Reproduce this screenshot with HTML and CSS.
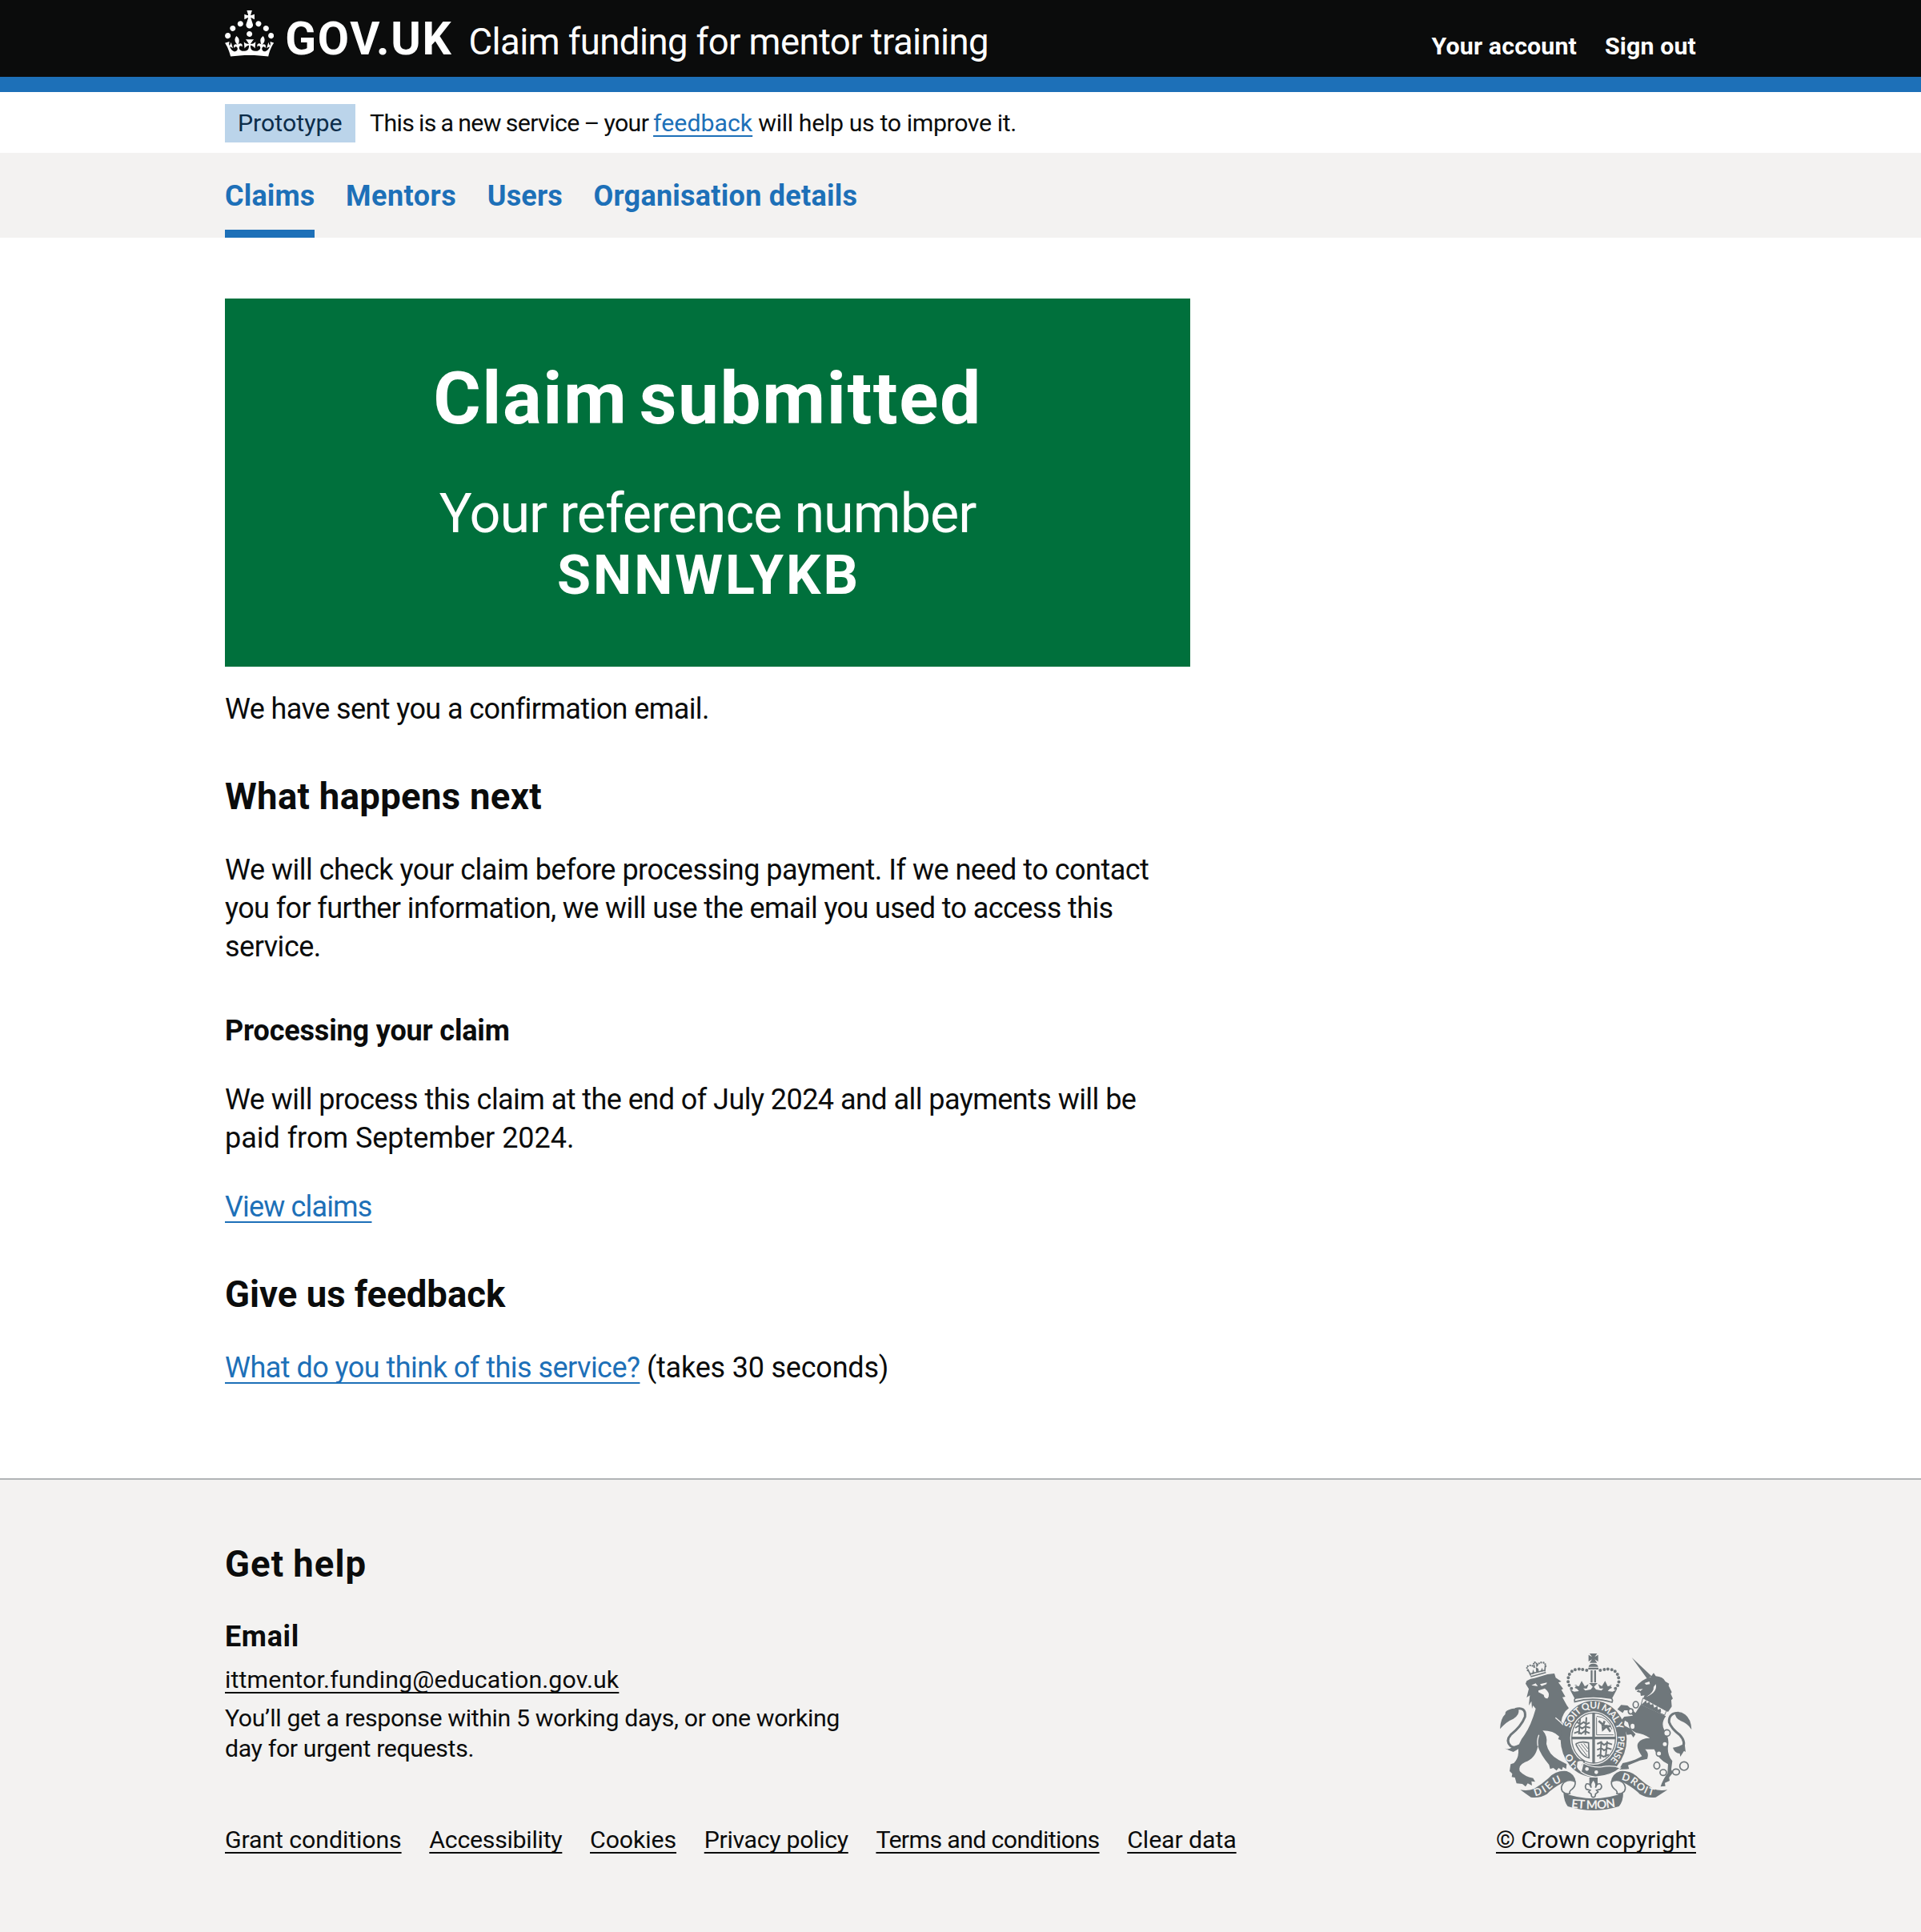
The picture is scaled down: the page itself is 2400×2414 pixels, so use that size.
FILE: index.html
```
<!DOCTYPE html>
<html lang="en">
<head>
<meta charset="utf-8">
<title>Claim submitted - Claim funding for mentor training</title>
<link rel="stylesheet" href="styles.css">
</head>
<body>
<header class="header">
  <div class="container header-row">
    <svg class="crown" viewBox="0 0 32 30" fill="currentColor" aria-hidden="true"><path d="M22.6 10.4c-1 .4-2-.1-2.4-1-.4-.9.1-2 1-2.4.9-.4 2 .1 2.4 1s-.1 2-1 2.4m-5.9 6.7c-.9.4-2-.1-2.4-1-.4-.9.1-2 1-2.4.9-.4 2 .1 2.4 1s-.1 2-1 2.4m10.8-3.7c-1 .4-2-.1-2.4-1-.4-.9.1-2 1-2.4.9-.4 2 .1 2.4 1s0 2-1 2.4m3.3 4.8c-1 .4-2-.1-2.4-1-.4-.9.1-2 1-2.4.9-.4 2 .1 2.4 1s-.1 2-1 2.4M17 4.7l2.3 1.2V2.5l-2.3.7-.2-.2.9-3h-3.4l.9 3-.2.2c-.1.1-2.3-.7-2.3-.7v3.4L15 4.7c.1.1.1.2.2.2l-1.3 4c-.1.2-.1.4-.1.6 0 1.1.8 2 1.9 2.2h.7c1-.2 1.9-1.1 1.9-2.1 0-.2 0-.4-.1-.6l-1.3-4c-.1-.2 0-.2.1-.3m-7.6 5.7c.9.4 2-.1 2.4-1 .4-.9-.1-2-1-2.4-.9-.4-2 .1-2.4 1s0 2 1 2.4m-5 3c.9.4 2-.1 2.4-1 .4-.9-.1-2-1-2.4-.9-.4-2 .1-2.4 1s.1 2 1 2.4m-3.2 4.8c.9.4 2-.1 2.4-1 .4-.9-.1-2-1-2.4-.9-.4-2 .1-2.4 1s0 2 1 2.4m14.8 11c4.4 0 8.6.3 12.3.8 1.1-4.5 2.4-7 3.7-8.8l-2.5-.9c.2 1.3.3 1.9 0 2.7-.4-.4-.8-1.1-1.1-2.3l-1.2 4c.7-.5 1.3-.8 2-.9-1.1 2.5-2.6 3.1-3.5 3-1.1-.2-1.7-1.2-1.5-2.1.3-1.2 1.5-1.5 2.1-.1 1.1-2.3-.8-3-2-2.3 1.9-1.9 2.1-3.5.6-5.6-2.1 1.6-2.1 3.2-1.2 5.5-1.2-1.4-3.2-.6-2.5 1.6.9-1.4 2.1-.5 1.9.8-.2 1.1-1.7 2.1-3.5 1.9-2.7-.2-2.9-2.1-2.9-3.6.7-.1 1.9.5 2.9 1.9l.4-4.3c-1.1 1.1-2.1 1.4-3.2 1.4.4-1.2 2.1-3 2.1-3h-5.4s1.7 1.9 2.1 3c-1.1 0-2.1-.2-3.2-1.4l.4 4.3c1-1.4 2.2-2 2.9-1.9-.1 1.5-.2 3.4-2.9 3.6-1.9.2-3.4-.8-3.5-1.9-.2-1.3 1-2.2 1.9-.8.7-2.3-1.2-3-2.5-1.6.9-2.2.9-3.9-1.2-5.5-1.5 2-1.3 3.7.6 5.6-1.2-.7-3.1 0-2 2.3.6-1.4 1.8-1.1 2.1.1.2.9-.3 1.9-1.5 2.1-.9.2-2.4-.5-3.5-3 .6 0 1.2.3 2 .9l-1.2-4c-.3 1.1-.7 1.9-1.1 2.3-.3-.8-.2-1.4 0-2.7l-2.9.9C1.3 23 2.6 25.5 3.7 30c3.7-.5 7.9-.8 12.3-.8"/></svg>
    <span class="logotype">GOV.UK</span>
    <span class="service-name">Claim funding for mentor training</span>
    <nav class="account"><a>Your account</a><a>Sign out</a></nav>
  </div>
</header>
<div class="container phase">
  <strong class="tag">Prototype</strong>
  <span class="phase-text"><span class="phase-lead">This is a new service – your </span><a class="link phase-link">feedback</a> will help us to improve it.</span>
</div>
<nav class="nav">
  <div class="container nav-row">
    <a class="nav-item active">Claims</a>
    <a class="nav-item mentors">Mentors</a>
    <a class="nav-item">Users</a>
    <a class="nav-item organisation">Organisation details</a>
  </div>
</nav>
<main class="container main">
  <div class="column">
    <section class="panel">
      <h1 class="panel-title">Claim submitted</h1>
      <div class="panel-body"><span>Your reference number</span><strong class="reference">SNNWLYKB</strong></div>
    </section>
    <p class="sent">We have sent you a confirmation email.</p>
    <h2 class="heading next">What happens next</h2>
    <p>We will check your claim before processing payment. If we need to contact<br><span class="tight">you for further information, we will use the email you used to access this</span><br>service.</p>
    <h3 class="subheading">Processing your claim</h3>
    <p class="process">We will process this claim at the end of July 2024 and all payments will be<br><span class="loose">paid from September 2024.</span></p>
    <p><a class="link view">View claims</a></p>
    <h2 class="heading">Give us feedback</h2>
    <p class="last"><a class="link">What do you think of this service?</a> <span class="takes">(takes 30 seconds)</span></p>
  </div>
</main>
<footer class="footer">
  <div class="container footer-row">
    <div class="footer-main">
      <h2 class="footer-title">Get help</h2>
      <h3 class="footer-sub">Email</h3>
      <p class="small"><a class="foot-link mail">ittmentor.funding@education.gov.uk</a></p>
      <p class="small">You’ll get a response within 5 working days, or one working<br>day for urgent requests.</p>
      <div class="foot-links">
        <a class="foot-link">Grant conditions</a>
        <a class="foot-link access">Accessibility</a>
        <a class="foot-link">Cookies</a>
        <a class="foot-link privacy">Privacy policy</a>
        <a class="foot-link terms">Terms and conditions</a>
        <a class="foot-link">Clear data</a>
      </div>
    </div>
    <div class="copyright">
      <svg class="arms" viewBox="72 45 718 590" aria-hidden="true">
        <defs>
          <path id="garter-top" d="M336 325A91 106 0 0 1 513 345"/>
          <path id="garter-right" d="M514 354A92 108 0 0 1 480 450"/>
          <path id="garter-left" d="M372 462A92 106 0 0 1 328 384"/>
          <path id="scroll-left" d="M204 580Q240 572 264 549Q280 534 306 525"/>
          <path id="scroll-mid" d="M338 622Q422 634 508 620"/>
          <path id="scroll-right" d="M526 518Q562 526 580 546Q606 570 648 579"/>
        </defs>
        <!-- lion's tail -->
        <path class="line" stroke-width="9" d="M128 254Q170 242 166 282Q152 318 112 350Q92 372 112 392Q128 404 152 388"/>
        <path d="M72 328Q74 288 92 272Q90 262 106 256Q122 246 142 256Q146 276 122 290Q96 300 72 328ZM88 400Q104 408 118 396L156 380Q154 398 122 414Q108 410 88 400Z"/>
        <!-- lion -->
        <path d="M168 158L172 148Q186 138 202 137L250 123L276 120L281 136L302 150L291 154L309 178L302 181L317 207L306 209L323 240L330 250Q306 268 302 300L318 322L334 350L338 380L330 390L326 378L318 388L312 376L302 384L300 370L290 366L294 356Q272 334 232 334Q252 356 246 384Q254 424 292 444L322 460L320 478L308 470L304 482L292 474L284 484L272 474L260 478L256 462Q224 424 214 392Q206 438 166 452Q140 464 146 486Q164 506 196 512L204 526L190 524L192 540L176 532L168 544L156 534L134 532L128 510L116 508L118 496L108 486L112 460L124 456Q140 440 141 416Q136 384 164 350Q188 316 206 252L196 240L192 252L190 224L180 240L184 202L172 210L180 178Z"/>
        <path class="paper" d="M190 164L206 157L214 168ZM222 160L248 154L246 160L228 167ZM216 184L240 176L248 184Q262 200 250 214Q238 214 236 200L216 190Z"/>
        <path class="bgline" stroke-width="4" d="M280 286Q318 316 334 350M214 392Q210 370 218 350"/>
        <path class="line" stroke-width="5" d="M187 132L244 116M182 122L240 108M188 128L176 104M240 112L242 88"/>
        <path class="dots" stroke-width="7" stroke-dasharray="0 8.5" d="M176 108Q168 94 182 90Q194 88 202 98Q196 82 200 78Q212 78 210 94Q214 80 230 78Q246 80 243 100"/>
        <path d="M192 124L196 104L202 120ZM208 118L206 96L216 102L218 114ZM224 112L230 98L234 112Z"/>
        <!-- unicorn's tail -->
        <path class="line" stroke-width="9" d="M742 268Q704 268 706 302Q714 326 746 350Q772 378 754 404"/>
        <path d="M790 330Q788 290 766 274Q748 260 728 266Q728 288 750 298Q774 306 790 330ZM720 398Q742 396 764 382L768 414L762 410L748 432L746 420Q728 420 720 398Z"/>
        <!-- unicorn -->
        <path d="M566 60L640 130L624 140ZM578 174Q600 142 636 134L648 118L656 130Q684 132 692 150L706 158L704 166L716 190L712 196L720 214L714 220L716 244L702 264L608 216L614 202L600 204L598 192L584 188L592 180L580 182Z"/>
        <path class="paper" d="M614 156L632 150L634 160L620 162ZM656 160Q664 190 620 208Q650 190 648 170ZM590 180L608 178L598 186Z"/>
        <path d="M600 236L694 280Q674 306 688 332Q708 362 702 392Q698 424 718 448L714 480L720 492L706 510L708 522L690 530L692 542L674 544Q684 514 700 494L702 460Q668 444 650 404L616 404Q632 418 624 440L596 446L552 464L556 478L518 480L532 456Q580 446 604 430Q580 396 590 380Q602 362 634 362Q610 346 582 342Q556 330 552 304L540 296L536 314L562 328L580 348L572 360L564 348L548 350L544 338L528 330L522 300L538 282L570 278L556 258L538 258L532 268L512 254L526 238L550 240L580 268Z"/>
        <path class="paper" stroke="#6f777b" stroke-width="3" d="M608 212L696 260L689 276L601 236Z"/>
        <path d="M612 228l8-8 2 12 10-6 4 12 10-4 4 14 12-6 2 14 10-4 2 10-4 8-70-34z"/>
        <g class="rings" stroke-width="5">
          <ellipse cx="581" cy="237" rx="10" ry="12"/><ellipse cx="562" cy="262" rx="9" ry="10"/><ellipse cx="569" cy="318" rx="10" ry="12"/><circle cx="698" cy="343" r="12"/><circle cx="690" cy="385" r="10"/><circle cx="668" cy="420" r="10"/><ellipse cx="660" cy="465" rx="11" ry="13"/><ellipse cx="684" cy="491" rx="12" ry="11"/><ellipse cx="732" cy="489" rx="13" ry="11"/><circle cx="762" cy="467" r="16"/>
        </g>
        <!-- royal crown -->
        <path d="M408 45H436L427 58L440 50V75L427 67L436 80H408L417 67L404 75V50L417 58ZM404 95Q406 83 422 83Q438 83 440 95ZM403 98H441V105H403ZM412 108H419V154H412ZM425 108H432V154H425ZM334 180L350 188L368 186Q362 176 352 174L360 162L350 164L368 168L378 148L390 168L404 160L398 176L384 176L392 184L412 180L420 170L406 156H438L424 170L432 180L452 184L460 176L446 176L440 160L454 168L466 148L476 168L492 164L484 162L492 174Q482 176 476 186L494 188L510 180L492 214Q422 200 352 214Z"/>
        <path class="dots" stroke-width="12" stroke-dasharray="0 14.3" d="M397 108Q330 90 327 146Q328 166 342 178M448 108Q514 90 518 146Q517 166 503 178"/>
        <!-- garter -->
        <ellipse cx="423" cy="365" rx="124" ry="143"/>
        <ellipse class="paper" cx="423" cy="362" rx="88" ry="100"/>
        <path class="paper" stroke="#6f777b" stroke-width="5" d="M352 226Q348 212 362 212Q422 202 482 212Q498 212 492 228Q422 206 352 226Z"/>
        <ellipse class="line" stroke-width="4" cx="423" cy="362" rx="82" ry="94"/>
        <path d="M418 268H428V357H505V367H428V456H418V367H341V357H418Z"/>
        <path class="line" stroke-width="6" d="M360 302l14 8 12-8 10 8 12-6M354 324l12-8 14 10 12-8 18 6M350 344l16-6 10 8 14-10 18 8M372 290l-4 58M396 284l-4 66M436 384l14-6 12 10 12-8 18 6M436 406l16-6 10 8 14-8 14 4M436 430l12-6 12 8 20-8M452 374l-4 66M474 374l-6 60"/>
        <path class="line" stroke-width="3" d="M434 284V350H498M434 280Q480 284 492 330"/>
        <path class="line" stroke-width="8" d="M442 298l14 12 2 20 14-12 14 20M464 298l-6 18 28 2"/>
        <path class="line" stroke-width="5" d="M356 384Q376 372 404 380L406 436Q380 434 356 384"/>
        <path class="line" stroke-width="3" d="M366 386L398 428M376 384L400 414M386 382L402 402"/>
        <g class="motto" font-size="36"><text textLength="250"><textPath href="#garter-top">SOIT QUI MAL Y</textPath></text><text font-size="34" textLength="98"><textPath href="#garter-right">PENSE</textPath></text><text textLength="58"><textPath href="#garter-left">HO</textPath></text></g>
        <path class="paper" stroke="#6f777b" stroke-width="5" d="M360 450Q374 440 388 450L382 462L388 484L374 490Q360 480 358 470Z"/>
        <path stroke="#f3f2f1" stroke-width="4" d="M384 456Q420 474 454 470Q490 462 524 474Q490 504 430 508Q396 504 376 488Z"/>
        <path class="paper" d="M391 478a7 7 0 1 0 14 0a7 7 0 1 0-14 0M426 490a7 7 0 1 0 14 0a7 7 0 1 0-14 0"/>
        <!-- scroll -->
        <path d="M148 556Q176 562 200 552Q230 534 254 512Q282 482 322 486Q352 496 356 526Q338 512 310 528Q268 550 248 572Q222 588 188 584Z"/>
        <path d="M700 556Q670 562 646 552Q616 534 592 512Q562 482 522 486Q492 496 488 526Q506 512 534 528Q576 550 596 572Q622 588 656 584Z"/>
        <path class="paper" stroke="#6f777b" stroke-width="5" d="M354 526Q334 514 312 528Q296 546 306 562Q318 574 334 570Q330 562 342 554Q356 542 354 526ZM490 526Q510 514 532 528Q548 546 538 562Q526 574 510 570Q514 562 502 554Q488 542 490 526Z"/>
        <path d="M310 568Q422 610 534 568Q534 600 518 618Q422 648 326 618Q312 600 310 568Z"/>
        <g class="motto" font-size="38"><text textLength="114"><textPath href="#scroll-left">DIEU</textPath></text><text font-size="45" textLength="168"><textPath href="#scroll-mid">ET MON</textPath></text><text textLength="136"><textPath href="#scroll-right">DROIT</textPath></text></g>
        <path d="M407 510H438V538H407Z"/>
        <path class="paper" stroke="#6f777b" stroke-width="5" d="M422 518Q436 532 430 548Q436 530 448 534Q458 544 448 554L434 558L440 564L430 572Q430 584 422 584Q414 584 414 572L404 564L410 558L396 554Q388 544 396 534Q408 530 414 548Q408 532 422 518Z"/>
      </svg>
      <a class="foot-link crown-link">© Crown copyright</a>
    </div>
  </div>
</footer>
</body>
</html>
```
FILE: styles.css
```
* { box-sizing: border-box; }
body { margin: 0; background: #fff; color: #0b0c0c; font-family: Roboto, "Liberation Sans", sans-serif; font-size: 36px; line-height: 47.9px; }
h1, h2, h3, p { margin: 0; }
.container { width: 1838px; margin: 0 auto; }

.header { height: 115px; background: #0b0c0c; border-bottom: 19px solid #1d70b8; color: #fff; }
.header-row { display: flex; align-items: baseline; padding-top: 19.5px; height: 96px; }
.crown { width: 61.3px; height: 57.5px; align-self: flex-start; margin-top: -6.5px; }
.logotype { margin-left: 14px; font-size: 57px; line-height: 57px; font-weight: 700; letter-spacing: 1.7px; }
.service-name { margin-left: 20px; font-size: 45.5px; letter-spacing: -.6px; line-height: 57px; }
.account { display: flex; gap: 35px; margin-left: auto; font-size: 30.3px; font-weight: 700; letter-spacing: .15px; line-height: 38px; }

.phase { display: flex; align-items: center; height: 76px; font-size: 30.3px; line-height: 38px; }
.tag { width: 163px; height: 48px; margin-top: 2px; padding: 5px 0 0 16px; background: #bbd4ea; color: #0c2d4a; font-weight: 400; }
.phase-text { margin: 2px 0 0 18px; letter-spacing: -.37px; }
.phase-lead { letter-spacing: -.6px; word-spacing: -1.2px; }

.nav { height: 106px; background: #f3f2f1; }
.nav-row { display: flex; gap: 38.5px; height: 106px; }
.nav-item { padding-top: 30.5px; color: #1d70b8; font-weight: 700; letter-spacing: .15px; }
.mentors { letter-spacing: .5px; }
.organisation { letter-spacing: .25px; }
.active { border-bottom: 10px solid #1d70b8; }

.link { color: #1d70b8; text-decoration: underline; text-decoration-thickness: 2px; text-underline-offset: 5.5px; text-decoration-skip-ink: none; }
.phase-link { letter-spacing: 0; text-underline-offset: 5px; }

.main { padding: 76.3px 0 113.5px; }
.column { width: 1206px; }
.column p { margin-bottom: 38.3px; letter-spacing: -.5px; }
.column .sent { letter-spacing: -.6px; }
.column .process { margin-bottom: 37.3px; letter-spacing: -.55px; }
.column .last { margin-bottom: 0; letter-spacing: -.53px; }
.panel { height: 460px; margin-bottom: 30px; padding-top: 78px; background: #00703c; color: #fff; text-align: center; }
.panel-title { font-size: 91px; line-height: 95.8px; letter-spacing: 1.6px; word-spacing: -10px; }
.panel-body { display: flex; flex-direction: column; margin-top: 57.4px; font-size: 68.3px; line-height: 76.6px; letter-spacing: -1px; }
.reference { padding-left: 3px; letter-spacing: 2.9px; }
.heading { margin: 57px 0 38.6px; font-size: 45.5px; line-height: 57.5px; }
.next { margin: 56px 0 39.6px; letter-spacing: .3px; }
.subheading { margin: 57.3px 0 38.2px; font-size: 36px; letter-spacing: -.17px; }
.tight { letter-spacing: -.61px; }
.loose { letter-spacing: -.03px; }
.view { letter-spacing: -.85px; }
.takes { letter-spacing: -.2px; }

.footer { height: 567px; border-top: 2px solid #b1b4b6; background: #f3f2f1; }
.footer-row { display: flex; justify-content: space-between; align-items: flex-end; padding-top: 77px; }
.footer-title { margin-bottom: 38.8px; font-size: 45.5px; line-height: 57.5px; letter-spacing: 1.1px; word-spacing: -1.5px; }
.footer-sub { margin-bottom: 10px; font-size: 36px; letter-spacing: .6px; }
.small { margin-bottom: 9.5px; font-size: 30.3px; line-height: 38.3px; letter-spacing: -.37px; }
.foot-link { color: #0b0c0c; text-decoration: underline; text-decoration-thickness: 2px; text-underline-offset: 5px; text-decoration-skip-ink: none; }
.mail { letter-spacing: .13px; }
.foot-links { display: flex; gap: 34.7px; margin-top: 75.8px; font-size: 30.3px; line-height: 38.3px; letter-spacing: -.1px; }
.access { letter-spacing: -.27px; }
.privacy { letter-spacing: -.33px; }
.terms { letter-spacing: -.63px; }
.copyright { display: flex; flex-direction: column; align-items: center; font-size: 30.3px; line-height: 38.3px; }
.crown-link { letter-spacing: -.05px; }
.arms { width: 239.3px; height: 196.7px; margin-bottom: 18px; fill: #6f777b; }
.paper { fill: #f3f2f1; }
.line, .rings { fill: none; stroke: #6f777b; }
.rings { fill: #f3f2f1; }
.bgline { fill: none; stroke: #f3f2f1; }
.dots { fill: none; stroke: #6f777b; stroke-linecap: round; }
.motto { fill: #f3f2f1; font-family: Lato, "Liberation Sans", sans-serif; font-weight: 700; }
```
